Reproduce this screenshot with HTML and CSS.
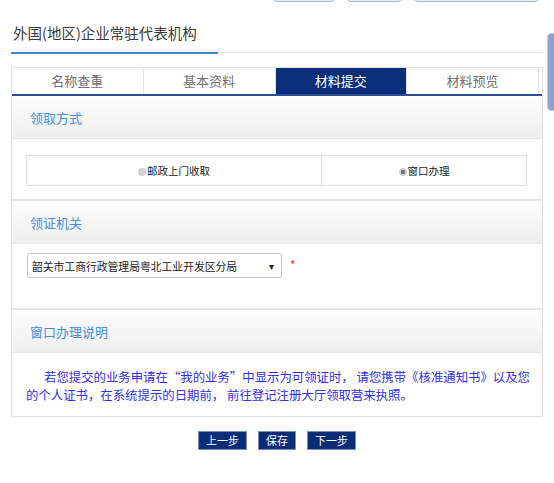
FILE: index.html
```html
<!DOCTYPE html>
<html lang="zh-CN">
<head>
  <meta charset="UTF-8">
  <title>外国(地区)企业常驻代表机构</title>
  <link rel="stylesheet" href="styles.css">
</head>
<body>
  <div class="top-bar">
    <span class="top-btn w1"></span>
    <span class="top-btn w2"></span>
    <span class="top-btn w3"></span>
  </div>
  <div class="side-tab"></div>

  <div class="wrap">
    <div class="page-title"><span>外国(地区)企业常驻代表机构</span></div>

    <div class="panel">
      <div class="tabs">
        <div class="tab">名称查重</div>
        <div class="tab">基本资料</div>
        <div class="tab active">材料提交</div>
        <div class="tab">材料预览</div>
      </div>

      <div class="sec-head">领取方式</div>
      <div class="sec-body radio-body">
        <table class="radio-table">
          <tr>
            <td><span class="radio"></span>邮政上门收取</td>
            <td><span class="radio on"></span>窗口办理</td>
          </tr>
        </table>
      </div>

      <div class="sec-head">领证机关</div>
      <div class="sec-body select-body">
        <div class="select">
          <span>韶关市工商行政管理局粤北工业开发区分局</span>
          <span class="arrow">▾</span>
        </div>
        <span class="req">*</span>
      </div>

      <div class="sec-head">窗口办理说明</div>
      <div class="sec-body note">
        <p>若您提交的业务申请在“我的业务”中显示为可领证时， 请您携带《核准通知书》以及您的个人证书，在系统提示的日期前， 前往登记注册大厅领取营来执照。</p>
      </div>
    </div>

    <div class="actions">
      <button class="btn">上一步</button>
      <button class="btn">保存</button>
      <button class="btn">下一步</button>
    </div>
  </div>
</body>
</html>
```

FILE: styles.css
```css
body {
  margin: 0;
  font-family: "Microsoft YaHei", "Noto Sans CJK SC", sans-serif;
  background: #fff;
  color: #333;
}
.top-bar {
  height: 14px;
  display: flex;
  justify-content: flex-end;
  gap: 12px;
  padding-right: 15px;
}
.top-btn {
  display: block;
  height: 20px;
  margin-top: -20px;
  border: 1px solid #a9b8d8;
  border-radius: 4px;
  background: #e9eef7;
}
.top-btn.w1 { width: 60px; }
.top-btn.w2 { width: 53px; }
.top-btn.w3 { width: 123px; }
.side-tab {
  position: fixed;
  right: -4px;
  top: 33px;
  width: 9px;
  height: 76px;
  background: #8ea2ca;
  border: 1px solid #c7d1e6;
  border-radius: 4px;
}
.wrap {
  margin-left: 11px;
  width: 532px;
}
.page-title {
  height: 38px;
  border-bottom: 1px solid #e3e9f1;
  font-size: 14.5px;
  line-height: 38px;
  color: #3a3a3a;
}
.page-title span {
  display: inline-block;
  width: 205px;
  padding-left: 2px;
  border-bottom: 2px solid #3a87d4;
  margin-bottom: -1px;
  height: 38px;
}
.panel {
  margin-top: 14px;
  border: 1px solid #dedede;
}
.tabs {
  display: flex;
  border-bottom: 2px solid #2e4f96;
  padding-right: 3px;
}
.tab {
  flex: 1;
  height: 26px;
  line-height: 26px;
  text-align: center;
  font-size: 13px;
  color: #707070;
  border-left: 1px solid #e2e2e2;
}
.tab:first-child {
  border-left: none;
}
.tab:last-child {
  border-right: 1px solid #e2e2e2;
}
.tab.active {
  background: #0b2e7a;
  color: #fff;
}
.sec-head {
  height: 42px;
  line-height: 44px;
  padding-left: 18px;
  font-size: 13px;
  color: #3f8fdc;
  background: linear-gradient(#fdfdfd, #efefef);
  border-bottom: 1px solid #e6e6e6;
}
.sec-body {
  border-bottom: 2px solid #e4e4e4;
}
.radio-body {
  height: 44px;
  padding: 16px 14px 0;
}
.radio-table {
  width: 501px;
  border-collapse: collapse;
}
.radio-table td {
  height: 27px;
  border: 1px solid #e0e0e0;
  text-align: center;
  font-size: 10.5px;
  color: #222;
}
.radio-table td:first-child {
  width: 292px;
}
.radio {
  display: inline-block;
  width: 8px;
  height: 8px;
  border-radius: 50%;
  background: #d4d4d4;
  border: 1px solid #c8c8c8;
  vertical-align: -1px;
  margin-right: 1px;
  box-sizing: border-box;
}
.radio.on {
  background: radial-gradient(circle, #777 0 2px, #d4d4d4 2.5px);
}
.select-body {
  height: 55px;
  padding: 9px 0 0 15px;
  display: flex;
  align-items: flex-start;
}
.select {
  width: 242px;
  height: 23px;
  border: 1px solid #c9c9c9;
  border-radius: 2px;
  display: flex;
  align-items: center;
  justify-content: space-between;
  padding: 0 7px 0 4px;
  font-size: 10.8px;
  color: #222;
}
.arrow {
  font-size: 10px;
}
.req {
  color: #f03030;
  font-size: 12px;
  margin: 3px 0 0 8px;
}
.note {
  height: 63px;
  border-bottom: none;
}
.note p {
  margin: 0;
  padding: 15px 8px 0 14px;
  text-indent: 18px;
  font-size: 12.4px;
  line-height: 18px;
  color: #3030ea;
}
.actions {
  display: flex;
  justify-content: center;
  gap: 11px;
  margin-top: 14px;
}
.btn {
  height: 19px;
  padding: 0 7px;
  border: 1px solid #7d8fc0;
  background: #0b2d78;
  color: #fff;
  font-family: inherit;
  font-size: 11px;
  line-height: 17px;
}
```
